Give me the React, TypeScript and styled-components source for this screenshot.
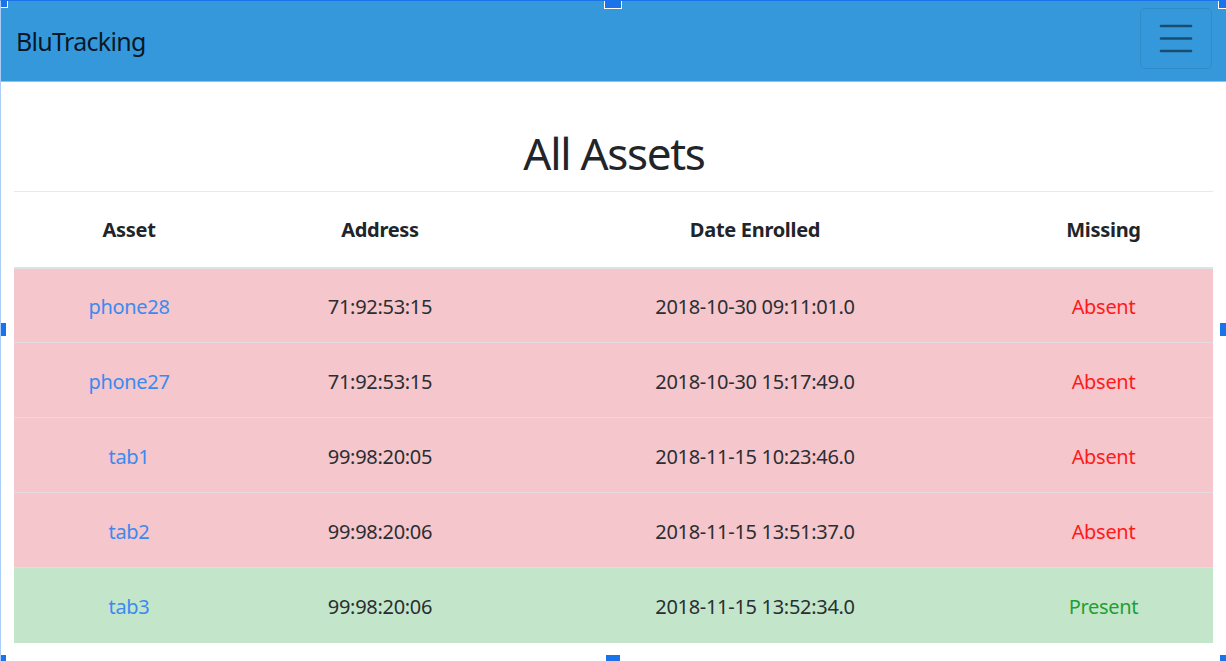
import React from "react";
import styled, { createGlobalStyle } from "styled-components";

const Global = createGlobalStyle`
  html, body { margin: 0; padding: 0; background: #ffffff; }
  body { font-family: "Noto Sans", "Open Sans", "Liberation Sans", sans-serif; color: #212529; }
  * { box-sizing: border-box; }
`;

const Frame = styled.div`
  position: relative;
  width: 1226px;
  height: 661px;
  overflow: hidden;
  border-left: 1px solid #a9cdf7;
  border-top: 1px solid #1a73e8;
`;

const NavBar = styled.nav`
  height: 81px;
  background: #3598db;
  border-bottom: 1px solid #8ec3ef;
  display: flex;
  align-items: center;
  justify-content: space-between;
  padding: 0 14px 0 15px;
`;

const Brand = styled.a`
  font-size: 25px;
  color: rgba(0, 0, 0, 0.85);
  text-decoration: none;
  letter-spacing: -0.7px;
  margin-top: -1px;
`;

const Toggler = styled.button`
  width: 72px;
  height: 61px;
  margin-top: -6px;
  border: 1px solid rgba(0, 0, 0, 0.08);
  border-radius: 5px;
  background: transparent;
  display: flex;
  align-items: center;
  justify-content: center;
  padding: 0;
`;

const Main = styled.main`
  padding: 0 12px 0 13px;
`;

const Title = styled.h1`
  margin: 0;
  padding-top: 41px;
  height: 109px;
  line-height: 60px;
  font-size: 44px;
  font-weight: 400;
  text-align: center;
  letter-spacing: -1.3px;
  color: #212529;
`;

const Table = styled.table`
  width: 1199px;
  border-collapse: collapse;
  border-top: 1px solid #e6e9ed;
  font-size: 20px;
  letter-spacing: -0.3px;
`;

const HeadCell = styled.th<{ $w: number }>`
  width: ${(p) => p.$w}px;
  height: 76px;
  font-weight: 700;
  text-align: center;
  border-bottom: 2px solid #dee2e6;
  padding: 0;
  color: #212529;
`;

const Row = styled.tr<{ $tone: "danger" | "success" }>`
  background: ${(p) => (p.$tone === "danger" ? "#f5c6cb" : "#c3e6cb")};
`;

const Cell = styled.td<{ $last?: boolean }>`
  height: 75px;
  text-align: center;
  padding: 2px 0 0;
  border-bottom: ${(p) => (p.$last ? "none" : "1px solid #e6dadd")};
  color: #2a2e33;
`;

const AssetLink = styled.a`
  color: #3b8af0;
  text-decoration: none;
`;

const Status = styled.span<{ $present: boolean }>`
  color: ${(p) => (p.$present ? "#1ea033" : "#ff1a1a")};
`;

const Handle = styled.span<{ $x: number; $y: number; $w: number; $h: number }>`
  position: absolute;
  z-index: 5;
  display: block;
  left: ${(p) => p.$x}px;
  top: ${(p) => p.$y}px;
  width: ${(p) => p.$w}px;
  height: ${(p) => p.$h}px;
  background: #1a73e8;
  box-shadow: 0 0 0 1px #ffffff;
`;

const assets = [
  { name: "phone28", addr: "71:92:53:15", date: "2018-10-30 09:11:01.0", present: false },
  { name: "phone27", addr: "71:92:53:15", date: "2018-10-30 15:17:49.0", present: false },
  { name: "tab1", addr: "99:98:20:05", date: "2018-11-15 10:23:46.0", present: false },
  { name: "tab2", addr: "99:98:20:06", date: "2018-11-15 13:51:37.0", present: false },
  { name: "tab3", addr: "99:98:20:06", date: "2018-11-15 13:52:34.0", present: true },
];

export default function App() {
  return (
    <>
      <Global />
      <Frame>
        <NavBar>
          <Brand href="#">BluTracking</Brand>
          <Toggler aria-label="menu">
            <svg width="34" height="30" viewBox="0 0 34 30">
              <g stroke="rgba(0,0,0,0.5)" strokeWidth="2.6" strokeLinecap="round">
                <line x1="2" y1="3" x2="32" y2="3" />
                <line x1="2" y1="15.5" x2="32" y2="15.5" />
                <line x1="2" y1="28" x2="32" y2="28" />
              </g>
            </svg>
          </Toggler>
        </NavBar>
        <Main>
          <Title>All Assets</Title>
          <Table>
            <thead>
              <tr>
                <HeadCell $w={230}>Asset</HeadCell>
                <HeadCell $w={272}>Address</HeadCell>
                <HeadCell $w={478}>Date Enrolled</HeadCell>
                <HeadCell $w={219}>Missing</HeadCell>
              </tr>
            </thead>
            <tbody>
              {assets.map((a, i) => {
                const last = i === assets.length - 1;
                return (
                  <Row key={a.name} $tone={a.present ? "success" : "danger"}>
                    <Cell $last={last}>
                      <AssetLink href="#">{a.name}</AssetLink>
                    </Cell>
                    <Cell $last={last}>{a.addr}</Cell>
                    <Cell $last={last}>{a.date}</Cell>
                    <Cell $last={last}>
                      <Status $present={a.present}>{a.present ? "Present" : "Absent"}</Status>
                    </Cell>
                  </Row>
                );
              })}
            </tbody>
          </Table>
        </Main>
        <Handle $x={-1} $y={-1} $w={7} $h={7} />
        <Handle $x={604} $y={-1} $w={16} $h={8} />
        <Handle $x={1218} $y={-1} $w={8} $h={8} />
        <Handle $x={-1} $y={322} $w={6} $h={13} />
        <Handle $x={1219} $y={322} $w={7} $h={13} />
        <Handle $x={-1} $y={654} $w={6} $h={7} />
        <Handle $x={605} $y={654} $w={14} $h={7} />
        <Handle $x={1219} $y={654} $w={7} $h={7} />
      </Frame>
    </>
  );
}
